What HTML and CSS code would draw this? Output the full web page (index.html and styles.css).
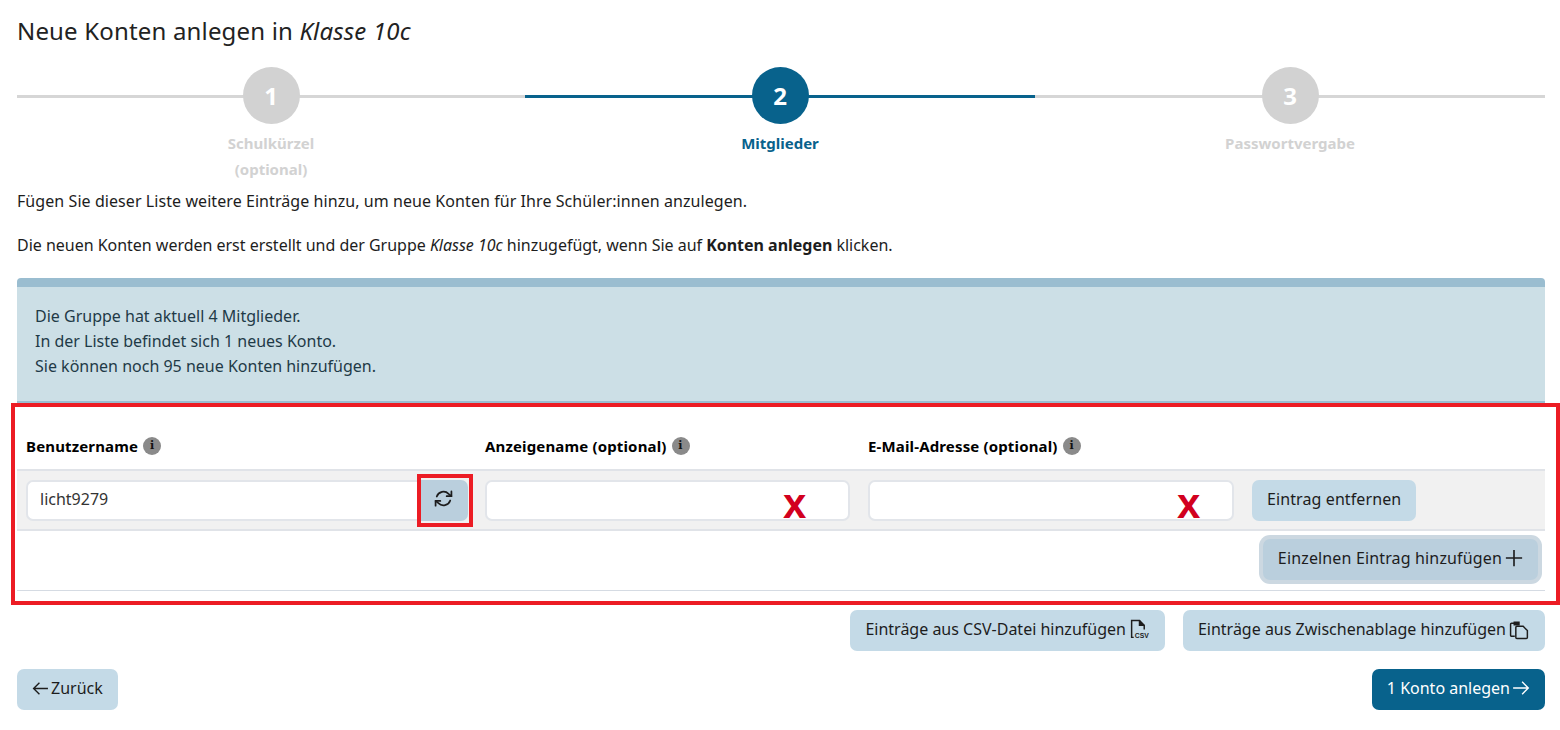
FILE: index.html
```html
<!DOCTYPE html>
<html lang="de">
<head>
  <meta charset="UTF-8" />
  <title>Neue Konten anlegen</title>
  <link rel="stylesheet" href="styles.css">
</head>
<body>
  <div class="page">
    <h1>Neue Konten anlegen in <em>Klasse 10c</em></h1>

    <!-- Schritte -->
    <div class="stepper">
      <div class="step">
        <div class="step-num">1</div>
        <div class="step-label">Schulkürzel<br>(optional)</div>
      </div>
      <div class="step active">
        <div class="step-num">2</div>
        <div class="step-label">Mitglieder</div>
      </div>
      <div class="step">
        <div class="step-num">3</div>
        <div class="step-label">Passwortvergabe</div>
      </div>
    </div>

    <p class="intro">Fügen Sie dieser Liste weitere Einträge hinzu, um neue Konten für Ihre Schüler:innen anzulegen.</p>
    <p class="intro tight">Die neuen Konten werden erst erstellt und der Gruppe <em>Klasse 10c</em> hinzugefügt, wenn Sie auf <strong>Konten anlegen</strong> klicken.</p>

    <div class="info-box">
      Die Gruppe hat aktuell 4 Mitglieder.<br>
      In der Liste befindet sich 1 neues Konto.<br>
      Sie können noch 95 neue Konten hinzufügen.
    </div>

    <!-- Tabelle -->
    <div class="table-wrap">
      <div class="row head">
        <div class="col-head">Benutzername <span class="info-icon">i</span></div>
        <div class="col-head">Anzeigename (optional) <span class="info-icon">i</span></div>
        <div class="col-head">E-Mail-Adresse (optional) <span class="info-icon">i</span></div>
      </div>
      <div class="row entry">
        <div class="input-group">
          <input class="field joined" type="text" value="licht9279" />
          <button class="btn refresh" aria-label="Neu erzeugen">
            <svg width="19" height="19" viewBox="0 0 24 24" fill="none" stroke="#1d1d1d" stroke-width="2.2" stroke-linecap="round" stroke-linejoin="round"><path d="M22 3v6h-6"/><path d="M2 21v-6h6"/><path d="M3.5 9.5a9 9 0 0 1 14.9-3.4L22 9"/><path d="M2 15l3.6 2.9a9 9 0 0 0 14.9-3.4"/></svg>
          </button>
          <span class="frame frame-refresh"></span>
        </div>
        <div class="mark-wrap">
          <input class="field" type="text" />
          <span class="mark mark-name">x</span>
        </div>
        <div class="mark-wrap">
          <input class="field" type="text" />
          <span class="mark mark-mail">x</span>
        </div>
        <button class="btn">Eintrag entfernen</button>
      </div>
      <div class="row add">
        <button class="btn focused">Einzelnen Eintrag hinzufügen
          <svg width="20" height="20" viewBox="0 0 16 16" fill="none" stroke="#1d1d1d" stroke-width="1.3"><path d="M8 1.5v13M1.5 8h13"/></svg>
        </button>
      </div>
      <span class="frame frame-table"></span>
    </div>

    <div class="import-row">
      <button class="btn">Einträge aus CSV-Datei hinzufügen
        <svg width="21" height="21" viewBox="0 0 20 20" fill="none" stroke="#1d1d1d" stroke-width="1.4"><path d="M4.5 17.5H2.5V1.5H10L14.5 6v4"/><path d="M10 1.5V6h4.5" fill="#1d1d1d"/><text x="5.5" y="18.5" class="csv-text">CSV</text></svg>
      </button>
      <button class="btn">Einträge aus Zwischenablage hinzufügen
        <svg width="21" height="21" viewBox="0 0 20 20" fill="none" stroke="#1d1d1d" stroke-width="1.4"><path d="M5.5 16.5H2.5a1 1 0 0 1-1-1V5a1 1 0 0 1 1-1H5"/><path d="M5 3h4.5v2.5H5z" fill="#1d1d1d"/><path d="M7.5 7h6l4 4v6.5a1 1 0 0 1-1 1H7.5a1 1 0 0 1-1-1V8a1 1 0 0 1 1-1z"/></svg>
      </button>
    </div>

    <div class="nav-row">
      <button class="btn nav">
        <svg width="17" height="17" viewBox="0 0 16 16" fill="none" stroke="#1d1d1d" stroke-width="1.3"><path d="M15 8H1.5M7 2.5 1.5 8 7 13.5"/></svg>
        Zurück
      </button>
      <button class="btn nav primary">1 Konto anlegen
        <svg width="18" height="18" viewBox="0 0 16 16" fill="none" stroke="#fff" stroke-width="1.2"><path d="M1 8h13.5M9 2.5 14.5 8 9 13.5"/></svg>
      </button>
    </div>
  </div>
</body>
</html>
```
FILE: styles.css
```css
* {
  box-sizing: border-box;
}

body {
  margin: 0;
  background: #fff;
  color: #1d1d1d;
  font-family: 'Noto Sans', sans-serif;
  font-size: 16px;
}

.page {
  padding: 15px 15px 0 17px;
}

h1 {
  margin: 0;
  font-size: 24px;
  font-weight: 400;
  line-height: 32px;
  letter-spacing: 0.17px;
  color: #222;
}

/* Schritte */
.stepper {
  display: grid;
  grid-template-columns: 508px 510px 510px;
  margin-top: 20px;
  height: 123px;
}

.step {
  position: relative;
  text-align: center;
  color: #d2d2d2;
}

.step::before {
  content: '';
  position: absolute;
  left: 0;
  right: 0;
  top: 28px;
  height: 3px;
  background: #d6d6d6;
}

.step.active {
  color: #08628c;
}

.step.active::before {
  background: #08628c;
}

.step-num {
  position: relative;
  width: 57px;
  height: 57px;
  margin: 0 auto;
  border-radius: 50%;
  background: #d2d2d2;
  color: #fff;
  font-size: 24px;
  font-weight: 700;
  line-height: 57px;
}

.active .step-num {
  background: #08628c;
}

.step-label {
  margin-top: 6px;
  font-size: 15px;
  font-weight: 700;
  line-height: 26px;
}

.intro {
  margin: 0 0 22px;
  line-height: 22px;
  letter-spacing: 0.07px;
}

.intro.tight {
  letter-spacing: -0.02px;
}

em {
  font-style: italic;
}

.info-box {
  margin-top: 22px;
  height: 127px;
  padding: 17px 18px;
  background: #ccdfe6;
  border-top: 9px solid #9abdd0;
  border-bottom: 4px solid #9abdd0;
  border-radius: 4px 4px 0 0;
  line-height: 25px;
  color: #1f3a47;
}

/* Tabelle */
.table-wrap {
  position: relative;
}

.row {
  display: grid;
  grid-template-columns: 459px 383px 384px auto;
  padding-left: 9px;
  align-items: center;
}

.row.head {
  height: 64px;
  padding-top: 18px;
}

.col-head {
  font-weight: 700;
  font-size: 15px;
  letter-spacing: 0.15px;
  color: #000;
  display: flex;
  align-items: center;
  gap: 5px;
}

.info-icon {
  display: inline-block;
  width: 18px;
  height: 18px;
  border-radius: 50%;
  background: #8a8a8a;
  color: #111;
  font-family: 'DejaVu Serif', serif;
  font-size: 11px;
  font-weight: 700;
  line-height: 18px;
  text-align: center;
}

.row.entry {
  height: 62px;
  background: #f1f1f1;
  border-top: 2px solid #e0e3e8;
  border-bottom: 2px solid #e0e3e8;
}

.row.add {
  display: flex;
  justify-content: flex-end;
  height: 60px;
  padding-right: 7px;
  padding-bottom: 3px;
  border-bottom: 1px solid #d5dbe3;
}

.input-group {
  position: relative;
  display: flex;
}

.mark-wrap {
  position: relative;
  padding-right: 18px;
}

.field {
  width: 100%;
  height: 41px;
  padding: 0 12px 3px;
  background: #fff;
  border: 2px solid #e2e5ea;
  border-radius: 7px;
  font-family: inherit;
  font-size: 16px;
  color: #333;
}

.field.joined {
  width: 392px;
  border-right: none;
  border-radius: 7px 0 0 7px;
}

.btn {
  display: inline-flex;
  align-items: center;
  justify-content: center;
  gap: 3px;
  height: 41px;
  padding: 0 15px 3px;
  background: #c4dae7;
  border: none;
  border-radius: 7px;
  font-family: inherit;
  font-size: 16px;
  color: #1d1d1d;
  white-space: nowrap;
}

.btn.refresh {
  width: 50px;
  padding: 0 0 4px;
  background: #bacfdd;
  border-radius: 0 7px 7px 0;
}

.btn.nav {
  gap: 2px;
}

.row.entry > .btn {
  justify-self: start;
  letter-spacing: 0.1px;
}

.btn.focused {
  padding: 0 14px 3px 15px;
  gap: 2px;
  letter-spacing: 0.15px;
  background: #bacfdd;
  box-shadow: 0 0 0 4px #ccd8e1;
}

.btn.primary {
  background: #08628c;
  color: #fff;
}

.csv-text {
  font-family: 'Liberation Sans', sans-serif;
  font-size: 6.5px;
  font-weight: 700;
  fill: #1d1d1d;
  stroke: none;
}

.import-row {
  display: flex;
  justify-content: flex-end;
  gap: 18px;
  margin-top: 19px;
}

.nav-row {
  display: flex;
  justify-content: space-between;
  margin-top: 18px;
}

/* Markierungen */
.frame {
  position: absolute;
  border: 4px solid #ec1c24;
  pointer-events: none;
}

.frame-table {
  left: -6px;
  right: -15px;
  top: -2px;
  bottom: -14px;
}

.frame-refresh {
  left: 391px;
  top: -6px;
  width: 56px;
  height: 53px;
}

.mark {
  position: absolute;
  top: 5px;
  color: #d2001e;
  font-family: 'Liberation Sans', sans-serif;
  font-size: 42px;
  font-weight: 700;
  line-height: 38px;
}

.mark-name {
  left: 298px;
}

.mark-mail {
  left: 309px;
}
```
